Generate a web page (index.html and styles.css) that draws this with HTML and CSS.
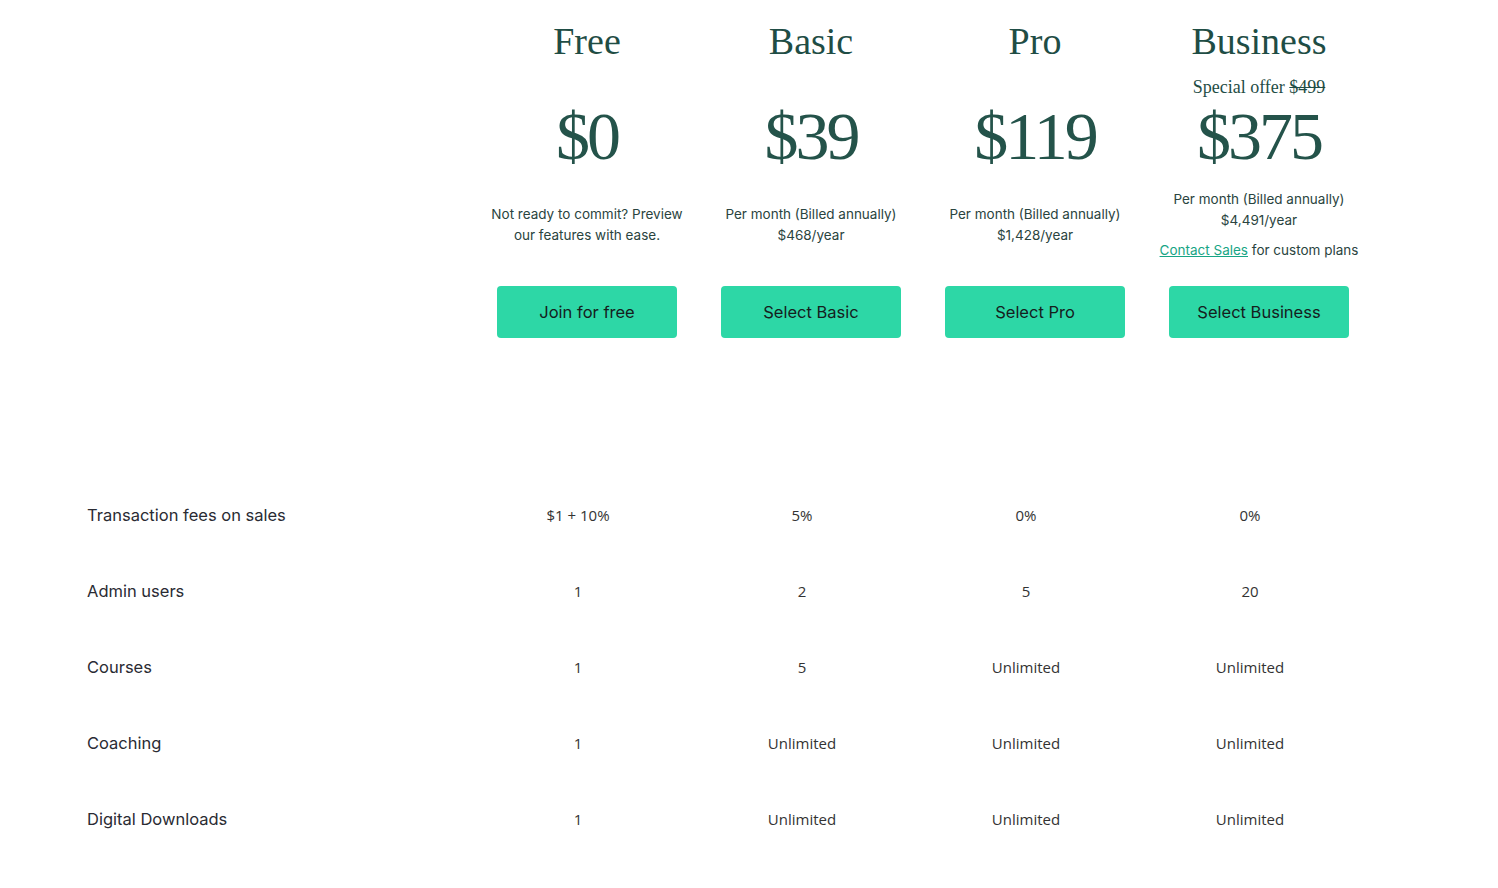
FILE: index.html
```html
<!DOCTYPE html>
<html lang="en">
<head>
<meta charset="utf-8">
<title>Pricing</title>
<link rel="stylesheet" href="styles.css">
</head>
<body>
<main class="page">
  <section class="plans">
    <div class="plan">
      <h2 class="plan-name">Free</h2>
      <div class="offer"></div>
      <div class="price">$0</div>
      <div class="desc"><p>Not ready to commit? Preview<br>our features with ease.</p></div>
      <a class="btn" href="#">Join for free</a>
    </div>
    <div class="plan">
      <h2 class="plan-name">Basic</h2>
      <div class="offer"></div>
      <div class="price">$39</div>
      <div class="desc"><p>Per month (Billed annually)<br>$468/year</p></div>
      <a class="btn" href="#">Select Basic</a>
    </div>
    <div class="plan">
      <h2 class="plan-name">Pro</h2>
      <div class="offer"></div>
      <div class="price">$119</div>
      <div class="desc"><p>Per month (Billed annually)<br>$1,428/year</p></div>
      <a class="btn" href="#">Select Pro</a>
    </div>
    <div class="plan">
      <h2 class="plan-name">Business</h2>
      <div class="offer">Special offer <s>$499</s></div>
      <div class="price">$375</div>
      <div class="desc"><p>Per month (Billed annually)<br>$4,491/year</p><p class="contact"><a href="#">Contact Sales</a> for custom plans</p></div>
      <a class="btn" href="#">Select Business</a>
    </div>
  </section>

  <section class="features">
    <div class="row"><div class="label">Transaction fees on sales</div><div class="val">$1 + 10%</div><div class="val">5%</div><div class="val">0%</div><div class="val">0%</div></div>
    <div class="row"><div class="label">Admin users</div><div class="val">1</div><div class="val">2</div><div class="val">5</div><div class="val">20</div></div>
    <div class="row"><div class="label">Courses</div><div class="val">1</div><div class="val">5</div><div class="val">Unlimited</div><div class="val">Unlimited</div></div>
    <div class="row"><div class="label">Coaching</div><div class="val">1</div><div class="val">Unlimited</div><div class="val">Unlimited</div><div class="val">Unlimited</div></div>
    <div class="row"><div class="label">Digital Downloads</div><div class="val">1</div><div class="val">Unlimited</div><div class="val">Unlimited</div><div class="val">Unlimited</div></div>
  </section>
</main>
</body>
</html>
```

FILE: styles.css
```css
* { box-sizing: border-box; }
html, body { margin: 0; padding: 0; background: #fff; }
body { font-family: Inter, "Liberation Sans", sans-serif; color: #222; }

.page { width: 1498px; }

.plans {
  display: grid;
  grid-template-columns: repeat(4, 224px);
  padding-left: 475px;
  padding-top: 18px;
}

.plan {
  display: flex;
  flex-direction: column;
  align-items: center;
  text-align: center;
}

.plan-name {
  margin: 0;
  font-family: "Liberation Serif", "Times New Roman", serif;
  font-weight: 400;
  font-size: 38px;
  line-height: 46px;
  color: #1f4d45;
}

.offer {
  height: 24px;
  margin-top: 11px;
  font-family: "Liberation Serif", "Times New Roman", serif;
  font-size: 18px;
  line-height: 24px;
  color: #1f4d45;
}

.price {
  margin-top: -1px;
  font-family: "Liberation Serif", "Times New Roman", serif;
  font-size: 68px;
  line-height: 76px;
  letter-spacing: -3px;
  color: #24534a;
}

.desc {
  margin-top: 3px;
  height: 96px;
  display: flex;
  flex-direction: column;
  justify-content: center;
  font-size: 13.5px;
  line-height: 21px;
  color: #2a4440;
}
.desc p { margin: 0; white-space: nowrap; }
.desc .contact { margin-top: 9px; }
.desc .contact a { color: #17a585; text-decoration: underline; }

.btn {
  margin-top: 13px;
  width: 180px;
  height: 52px;
  display: flex;
  align-items: center;
  justify-content: center;
  background: #2dd7a6;
  border-radius: 4px;
  color: #15201d;
  font-size: 16.5px;
  text-decoration: none;
}

.features {
  margin-top: 139px;
}

.row {
  display: grid;
  grid-template-columns: 379px repeat(4, 224px);
  padding-left: 87px;
  height: 76px;
  align-items: center;
}

.label {
  font-size: 16.5px;
  color: #2a2b33;
}

.val {
  text-align: center;
  font-family: "Open Sans", "Noto Sans", sans-serif;
  font-size: 15px;
  color: #333;
}
```
